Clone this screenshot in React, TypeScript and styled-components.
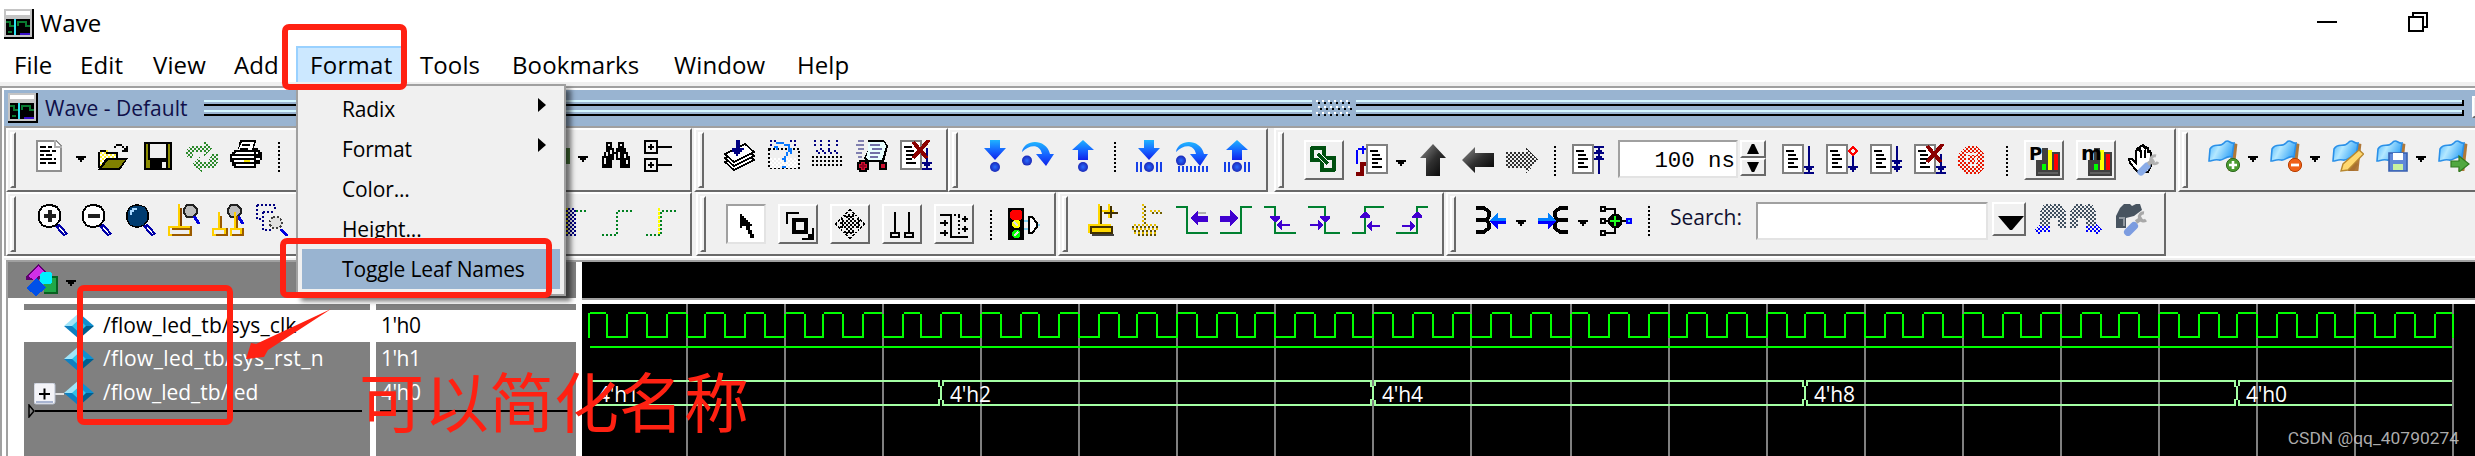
import React from "react";
import styled, { createGlobalStyle, css } from "styled-components";

const UI = `"Open Sans", "Noto Sans", sans-serif`;
const face = "#f0f0f0";
const dark = "#696969";
const mid = "#a0a0a0";
const steel = "#99b4d1";
const red = "#ff2112";

const Global = createGlobalStyle`
  * { box-sizing: border-box; }
  body { margin: 0; background: #fff; overflow: hidden; font-family: ${UI}; color: #000; }
  svg { display: block; flex: none; }
`;

const Screen = styled.div`
  position: relative;
  width: 2475px;
  height: 456px;
  overflow: hidden;
  display: flex;
  flex-direction: column;
  background: #fff;
`;

/* ---------- window chrome ---------- */
const TitleBar = styled.header`
  height: 46px;
  flex: none;
  display: flex;
  align-items: flex-start;
  padding: 9px 47px 0 4px;
`;
const WindowTitle = styled.span`
  margin: -2px 0 0 6px;
  font-size: 24px;
  line-height: 32px;
  flex: 1;
  letter-spacing: 0.1px;
`;
const WindowButton = styled.div<{ $mr?: number }>`
  margin-right: ${(p) => p.$mr ?? 0}px;
`;
const MenuBar = styled.nav`
  height: 36px;
  flex: none;
  display: flex;
`;
const MenuEntry = styled.span<{ $w: number; $active?: boolean; $ls?: number }>`
  width: ${(p) => p.$w}px;
  flex: none;
  height: 38px;
  padding-left: 14px;
  font-size: 24px;
  line-height: 38px;
  white-space: nowrap;
  letter-spacing: ${(p) => p.$ls ?? 0}px;
  ${(p) =>
    p.$active &&
    css`
      background: #cce8ff;
      box-shadow: inset 0 0 0 2px #99d1ff;
    `}
`;

const Pane = styled.main`
  flex: 1;
  display: flex;
  flex-direction: column;
  border-top: 4px solid ${face};
  min-height: 0;
`;
const PaneFrame = styled.div`
  flex: 1;
  display: flex;
  flex-direction: column;
  border-top: 2px solid ${mid};
  border-left: 2px solid ${mid};
  box-shadow: inset 2px 2px 0 #fff;
  padding: 2px 0 0 2px;
  min-height: 0;
`;
const DockTitle = styled.div`
  height: 36px;
  flex: none;
  display: flex;
  align-items: flex-start;
  padding: 3px 0 0 4px;
  background: ${steel};
`;
const DockName = styled.span`
  width: 159px;
  flex: none;
  margin: 1px 0 0 7px;
  font-size: 21px;
  line-height: 28px;
  color: #10104a;
  white-space: nowrap;
`;
const Rails = styled.div<{ $w: number; $cap?: boolean }>`
  width: ${(p) => p.$w}px;
  height: 16px;
  margin-top: 7px;
  flex: none;
  background: linear-gradient(
    #d4f6ff 0 2px, ${steel} 2px 4px, #000 4px 6px, ${steel} 6px 10px,
    #d4f6ff 10px 12px, ${steel} 12px 14px, #000 14px 16px
  );
  ${(p) =>
    p.$cap &&
    css`
      position: relative;
      &::after {
        content: "";
        position: absolute;
        right: 0;
        top: 0;
        width: 2px;
        height: 16px;
        background: linear-gradient(#000 0 6px, transparent 6px 10px, #000 10px 16px);
      }
    `}
`;
const RailGap = styled.div`
  margin-top: 7px;
  flex: none;
`;
const DockButton = styled.div`
  width: 20px;
  height: 22px;
  margin: 3px 0 0 8px;
  flex: none;
  background: ${face};
  border: 2px solid #fff;
  border-bottom-color: ${dark};
`;

/* ---------- toolbars ---------- */
const ToolRow = styled.div<{ $first?: boolean }>`
  height: ${(p) => (p.$first ? 66 : 64)}px;
  flex: none;
  display: flex;
  padding-left: 2px;
  background: ${face};
  border-top: ${(p) => (p.$first ? `2px solid ${mid}` : "0")};
  box-shadow: inset 2px 0 0 ${mid};
`;
const Strip = styled.section<{ $w: number; $ml?: number }>`
  width: ${(p) => p.$w}px;
  margin-left: ${(p) => p.$ml ?? 0}px;
  flex: none;
  height: 64px;
  display: flex;
  gap: 12px;
  align-items: flex-start;
  padding: 2px 0 0 2px;
  border: 2px solid;
  border-color: #fff ${dark} ${dark} #fff;
  overflow: hidden;
`;
const Grip = styled.i`
  width: 6px;
  height: 56px;
  flex: none;
  margin-right: 8px;
  border: 2px solid;
  border-color: #fff ${dark} ${dark} #fff;
`;
const Tool = styled.div<{ $mt?: number; $ml?: number }>`
  width: 32px;
  height: 32px;
  flex: none;
  margin: ${(p) => p.$mt ?? 8}px 0 0 ${(p) => p.$ml ?? 0}px;
`;
const ToolButton = styled.div<{ $pressed?: boolean }>`
  width: 40px;
  height: 40px;
  flex: none;
  margin-top: 8px;
  padding: 2px;
  border: 2px solid;
  border-color: ${(p) => (p.$pressed ? `${mid} #e3e3e3 #e3e3e3 ${mid}` : `#fff ${dark} ${dark} #fff`)};
  background: ${(p) => (p.$pressed ? "#fff" : face)};
`;
const Caret = styled.i<{ $mt?: number }>`
  width: 10px;
  height: 6px;
  flex: none;
  margin: ${(p) => p.$mt ?? 24}px 0 0 -4px;
  background: #000;
  clip-path: polygon(0 0, 100% 0, 100% 33%, 80% 33%, 80% 66%, 60% 66%, 60% 100%, 40% 100%, 40% 66%, 20% 66%, 20% 33%, 0 33%);
`;
const Dots = styled.i<{ $mt?: number }>`
  width: 2px;
  height: 30px;
  flex: none;
  margin: ${(p) => p.$mt ?? 10}px 4px 0;
  background: repeating-linear-gradient(#000 0 2px, transparent 2px 4px);
`;
const Spacer = styled.i<{ $w: number }>`
  width: ${(p) => p.$w}px;
  flex: none;
`;
const Field = styled.div<{ $w: number; $mt: number; $ml: number }>`
  width: ${(p) => p.$w}px;
  height: 38px;
  flex: none;
  margin: ${(p) => p.$mt}px 0 0 ${(p) => p.$ml}px;
  border: 2px solid;
  border-color: ${mid} #e3e3e3 #e3e3e3 ${mid};
  background: #fff;
  text-align: right;
  padding-right: 1px;
  font-family: "Liberation Mono", monospace;
  font-size: 22.4px;
  line-height: 38px;
  white-space: pre;
`;
const Spinner = styled.div`
  width: 26px;
  margin: 8px 4px 0 -10px;
  flex: none;
  display: flex;
  flex-direction: column;
`;
const SpinButton = styled.div<{ $down?: boolean }>`
  height: 18px;
  border: 2px solid;
  border-color: #fff ${dark} ${dark} #fff;
  display: flex;
  justify-content: center;
  padding-top: 2px;
  &::after {
    content: "";
    width: 12px;
    height: 10px;
    background: #000;
    clip-path: ${(p) => (p.$down ? "polygon(0 0, 100% 0, 60% 100%, 40% 100%)" : "polygon(40% 0, 60% 0, 100% 100%, 0 100%)")};
  }
`;
const SearchLabel = styled.span`
  width: 70px;
  margin: 5px 0 0 4px;
  flex: none;
  font-size: 21px;
  line-height: 32px;
  color: #101030;
`;
const ComboButton = styled.div`
  width: 34px;
  height: 34px;
  flex: none;
  margin: 6px 0 0 -8px;
  border: 2px solid;
  border-color: #fff ${dark} ${dark} #fff;
  padding: 12px 0 0 4px;
  &::after {
    content: "";
    display: block;
    width: 26px;
    height: 14px;
    background: #000;
    clip-path: polygon(0 0, 100% 0, 54% 100%, 46% 100%);
  }
`;

/* ---------- signals and waves ---------- */
const Body = styled.div`
  flex: 1;
  display: flex;
  min-height: 0;
  background: #fff;
  border-top: 2px solid #fff;
  box-shadow: inset 0 2px 0 ${face};
  padding: 2px 0 0 2px;
`;
const SignalPane = styled.div`
  width: 570px;
  flex: none;
  display: flex;
  flex-direction: column;
  border-top: 2px solid ${mid};
  border-left: 2px solid ${mid};
`;
const SignalHeader = styled.div`
  height: 36px;
  flex: none;
  display: flex;
  padding: 2px 0 0 18px;
  gap: 12px;
  background: #808080;
`;
const Columns = styled.div`
  flex: 1;
  display: flex;
  min-height: 0;
  margin-top: 2px;
  border-top: 4px solid #fff;
  background: #fff;
`;
const Gutter = styled.div`
  width: 16px;
  flex: none;
`;
const Column = styled.div<{ $w: number; $ml?: number }>`
  width: ${(p) => p.$w}px;
  margin-left: ${(p) => p.$ml ?? 0}px;
  flex: none;
  padding-top: 6px;
  background: #808080;
`;
const SignalRow = styled.div<{ $selected?: boolean; $h?: number }>`
  height: ${(p) => p.$h ?? 34}px;
  display: flex;
  align-items: center;
  font-size: 21px;
  line-height: 30px;
  white-space: nowrap;
  color: ${(p) => (p.$selected ? "#000" : "#fff")};
  background: ${(p) => (p.$selected ? "#fff" : "transparent")};
`;
const Expander = styled.div<{ $shown?: boolean }>`
  width: 40px;
  height: 30px;
  padding: 5px 0 0 10px;
  flex: none;
  svg { visibility: ${(p) => (p.$shown ? "visible" : "hidden")}; }
`;
const SignalName = styled.span<{ $ls: number }>`
  margin-left: 9px;
  padding-bottom: 2px;
  letter-spacing: ${(p) => p.$ls}px;
`;
const SignalValue = styled.span`
  margin-left: 5px;
  padding-bottom: 2px;
  letter-spacing: -0.5px;
`;
const InsertLine = styled.div<{ $l: number; $r: number }>`
  height: 14px;
  display: flex;
  align-items: center;
  margin: -6px ${(p) => p.$r}px 0 ${(p) => p.$l}px;
  &::after {
    content: "";
    flex: 1;
    height: 2px;
    background: #000;
  }
`;
const WavePane = styled.div`
  flex: 1;
  display: flex;
  flex-direction: column;
  border-top: 2px solid ${mid};
`;
const WaveBox = styled.div<{ $h?: number }>`
  ${(p) => (p.$h ? `height: ${p.$h}px; flex: none;` : `flex: 1; margin-top: 6px; box-shadow: 0 -4px 0 #fff, 0 -6px 0 ${mid};`)}
  margin-left: 6px;
  background: #000;
`;

/* ---------- overlays ---------- */
const Popup = styled.div`
  position: absolute;
  left: 296px;
  top: 84px;
  width: 270px;
  height: 212px;
  padding: 3px 4px 4px;
  background: ${face};
  border: 2px solid ${mid};
  box-shadow: 5px 5px 5px rgba(0, 0, 0, 0.55);
`;
const PopupItem = styled.div<{ $active?: boolean }>`
  height: 40px;
  display: flex;
  justify-content: space-between;
  padding: 0 14px 0 40px;
  font-size: 21px;
  line-height: 41px;
  letter-spacing: -0.15px;
  white-space: nowrap;
  background: ${(p) => (p.$active ? steel : "transparent")};
`;
const SubArrow = styled.i`
  width: 8px;
  height: 14px;
  margin-top: 9px;
  background: #000;
  clip-path: polygon(0 0, 100% 50%, 0 100%);
`;
const Marker = styled.div<{ $x: number; $y: number; $w: number; $h: number }>`
  position: absolute;
  left: ${(p) => p.$x}px;
  top: ${(p) => p.$y}px;
  width: ${(p) => p.$w}px;
  height: ${(p) => p.$h}px;
  border: 6px solid ${red};
  border-radius: 7px;
`;
const Note = styled.div`
  position: absolute;
  left: 359px;
  top: 361px;
  font-family: "Noto Sans CJK SC", sans-serif;
  font-size: 65px;
  line-height: 76px;
  color: ${red};
  white-space: nowrap;
`;
const Pointer = styled.svg`
  position: absolute;
  left: 240px;
  top: 304px;
`;
const Watermark = styled.div`
  position: absolute;
  right: 16px;
  bottom: 5px;
  font-family: Roboto, sans-serif;
  font-size: 17.4px;
  line-height: 26px;
  letter-spacing: 0;
  color: rgba(205, 205, 205, 0.85);
`;

/* ---------- icons, drawn on a 16 x 16 grid ---------- */
const Icon = ({ children, size = 32 }: { children: React.ReactNode; size?: number }) => (
  <svg width={size} height={size} viewBox={`0 0 ${size / 2} ${size / 2}`} shapeRendering="crispEdges" fill="none">
    {children}
  </svg>
);
/** one-unit-wide line */
const L = ({ d, c = "#000", w = 1, dash }: { d: string; c?: string; w?: number; dash?: string }) => (
  <path d={d} stroke={c} strokeWidth={w} strokeDasharray={dash} />
);
const F = ({ d, c = "#000" }: { d: string; c?: string }) => <path d={d} fill={c} />;
const Dim = ({ children }: { children: React.ReactNode }) => <g mask="url(#dither)">{children}</g>;

const HiddenDefs = styled.svg`
  position: absolute;
`;
const Defs = () => (
  <HiddenDefs width="0" height="0">
    <defs>
      <pattern id="check" width="2" height="2" patternUnits="userSpaceOnUse">
        <path d="M0 0h1v1h-1zM1 1h1v1h-1z" fill="#fff" shapeRendering="crispEdges" />
      </pattern>
      <mask id="dither" maskUnits="userSpaceOnUse" x="0" y="0" width="18" height="18">
        <rect width="18" height="18" fill="url(#check)" />
      </mask>
      <linearGradient id="blue" x1="0" y1="0" x2="0" y2="1">
        <stop offset="0" stopColor="#1fb4ff" />
        <stop offset=".55" stopColor="#1560ff" />
        <stop offset="1" stopColor="#1020e8" />
      </linearGradient>
      <radialGradient id="ball">
        <stop offset="0" stopColor="#2a6cff" />
        <stop offset="1" stopColor="#1a28b8" />
      </radialGradient>
      <linearGradient id="black" x1="0" y1="0" x2="1" y2="1">
        <stop offset="0" stopColor="#909090" />
        <stop offset=".5" stopColor="#303030" />
        <stop offset="1" stopColor="#000" />
      </linearGradient>
      <linearGradient id="flag" x1="0" y1="0" x2="1" y2=".4">
        <stop offset="0" stopColor="#48b4ff" />
        <stop offset=".45" stopColor="#b4e8ff" />
        <stop offset="1" stopColor="#3ca8f8" />
      </linearGradient>
    </defs>
  </HiddenDefs>
);

const AppIcon = () => (
  <Icon size={30}>
    <F d="M0 0h15v15h-15z" c="#000" />
    <F d="M0 0h14v14h-14z" c="#c4c4c4" />
    <F d="M1 1h12v2h-12z" c="#fff" />
    <F d="M1 5h12v8h-12z" c="#000" />
    <L d="M1 6.5h2v2h3M7 8.5v-2h4v2h2M2 11.5h2" c="#0a7a30" />
    <L d="M5.5 5v8" c="#30e0f0" />
    <L d="M8 12.5h5" c="#3a10c8" />
  </Icon>
);

const Page = () => (
  <>
    <F d="M0 0h11v15h-11z" c="#808080" />
    <F d="M1 1h9v13h-9z" c="#fff" />
    <L d="M2 3.5h4M3 5.5h4M3 7.5h5M3 9.5h3M3 11.5h5" />
  </>
);
const NewDoc = () => (
  <Icon>
    <F d="M0 0h10l3 3v13h-13z" c="#909090" />
    <F d="M1 1h9l2 2v12h-11z" c="#fff" />
    <L d="M9.500 0v3.500h3.500" c="#b0b0b0" />
    <L d="M2 3.500h3M6 3.500h2M2 5.500h5M8 5.500h2M2 7.500h2M5 7.500h3M2 9.500h6M9 9.500h1M2 11.500h3M6 11.500h4" />
  </Icon>
);
const Open = () => (
  <Icon>
    <F d="M0 6h1v-1h4v1h5v3h-6l-3 5h-1z" c="#ffef30" />
    <Dim><F d="M1 6h8v3h-5l-3 5z" c="#fff" /></Dim>
    <L d="M.5 14v-8M1 5.500h3M4 6.500h6M9.500 6v3" />
    <F d="M4 9h11l-4 6h-11z" c="#000" />
    <F d="M5 10h8.500l-3 4h-8.500z" c="#808000" />
    <L d="M8 3.500h1M9 2.500h3M12 3.500h1M13 4.500h1M14.500 3v3M12 5.500h3" />
  </Icon>
);
const Save = () => (
  <Icon>
    <F d="M1 1h14v14h-14z" />
    <F d="M2 2h12v12h-12z" c="#8c8c00" />
    <F d="M3 1h10v9h-10z" />
    <F d="M4 2h8v7h-8z" c={face} />
    <F d="M4 10h9v5h-9z" />
    <F d="M10 11h2v3h-2z" c={face} />
  </Icon>
);
const Reload = () => (
  <Icon>
    <Dim>
      <F d="M0 8V5l2-2h7V0l4 4l-4 4V6H4L3 9H1z" c="#2c8a2c" />
      <F d="M16 7v4l-2 3H8v2l-5-4l4-4v3h4l2-4z" c="#2c8a2c" />
    </Dim>
  </Icon>
);
const Print = () => (
  <Icon>
    <F d="M5 0h8v1l-1 3h2v1h1v1h1v4h-1v2h-2v2h-11v-1h-1v-2h-1v-4h1v-1h1v-1h2z" />
    <F d="M6 1h6l-1 4h-7z" c="#fff" />
    <L d="M6 2.500h4M5 4.500h4" />
    <F d="M3 6h9v1h-10zM1 8h11v1h-11zM2 10h10v1h-10zM13 6h1v1h-1zM13 9h2v1h-2z" c="#fff" />
    <F d="M3 12h9v1h-9z" c="#fff" />
    <L d="M7 10.500h3" c="#f8e800" />
  </Icon>
);
const RedoEdge = () => (
  <Icon><F d="M10 4h6v8h-6z" c="#4a7a3a" /></Icon>
);
const Binoculars = () => (
  <Icon>
    <F d="M3 1h3v3h1v2h1v-2h1v-3h3v3h1v2h1v2h1v6h-5v-4h-4v4h-5v-6h1v-2h1z" />
    <L d="M4.500 2v1M10.500 2v1M3.500 6v2M2.500 9v3M9.500 6v3M5.500 5v2M12.500 7v2M13.500 10v2M7.500 7v3" c={face} />
  </Icon>
);
const Tree = () => (
  <Icon>
    <F d="M0 0h7v7h-7zM0 9h7v7h-7z" />
    <F d="M1 1h5v5h-5zM1 10h5v5h-5z" c={face} />
    <L d="M3.500 2v3M2 3.500h3M3.500 11v3M2 12.500h3M7 3.500h7M7 12.500h7" />
  </Icon>
);
const Compile = () => (
  <Icon>
    {[4.5, 2.5, 0.5].map((y) => (
      <path key={y} d={`M.5 ${y + 6.5}l4.500 4l10 -5l-4.500 -4z`} fill="#fff" stroke="#000" strokeWidth=".8" />
    ))}
    <F d="M6 0h2v4h2v1h-1v1h-1v1h-1v1h-1v-1h-1v-1h-1v-2h2z" c="#000080" />
  </Icon>
);
const CompileAsk = () => (
  <Icon>
    <L d="M1 .5h3M11 .5h3M1.500 2v2M13 2.500h2" c="#000080" dash="1 1" />
    <path d="M.5 4.500h15v9.500h-15z" stroke="#000" strokeDasharray="1 1" />
    <Dim><F d="M1 9h14v5h-14z" c="#fff" /></Dim>
    <L d="M4 1.500h4M3 3.500h2M8 2.500h3M10.500 3v3M11.500 4v3M9.500 6v2M8.500 8v3M7.500 9v1M7 13.500h2M4.500 4v1" c="#0878ff" />
  </Icon>
);
const CompileAll = () => (
  <Icon>
    <L d="M1.500 0v4M4.500 0v5M8.500 0v5M12.500 0v4" c="#000080" dash="1 1" />
    <L d="M2 5.500h12M3 6.500h10" c="#000080" dash="1 2" />
    {[8.5, 10.5, 12.5].map((y) => <L key={y} d={`M0 ${y}h15`} dash="1 1" />)}
  </Icon>
);
const Simulate = () => (
  <Icon>
    <L d="M1 .5h3M0 2.500h4M1 4.500h3M0 6.500h3M1 8.500h2" c="#8080b0" />
    <F d="M6 0h8l2 3l-2 8h-9l-1-2l2-4z" />
    <F d="M6 1h8l1 2l-2 7h-7l-1-1l1-4z" c="#e8ffff" />
    <L d="M7 2.500h5M8 4.500h5M7 6.500h5M7 8.500h4" c="#7070a8" />
    <path d="M2 10.500h3v1h1v3h-1v1h-3v-1h-1v-3h1zM12 11.500h3v3h-3z" fill="#d01030" stroke="#000" />
    <L d="M3.500 11.500v3M2 13h3" c="#900020" />
  </Icon>
);
const Cross = () => (
  <path d="M6.500 1l7 8M14.500 0l-8 9" stroke="#8b0000" strokeWidth="1.9" />
);
const BreakSim = () => (
  <Icon>
    <Page />
    <L d="M13.500 4v10M11 11.500h5M12 12.500h3M11 14.500h5" c="#000080" />
    <Cross />
  </Icon>
);
const Bars = () => <L d="M2.500 11v5M4.500 11v5M12.500 11v5M14.500 11v5" c="#1640e8" />;
const StepIn = ({ bars }: { bars?: boolean }) => (
  <Icon>
    <g shapeRendering="auto">
      <path d="M6 0h5v4h3l-5.500 6L3 4h3z" fill="url(#blue)" />
      <circle cx="8.500" cy="13.500" r="2.500" fill="url(#ball)" />
    </g>
    {bars && <Bars />}
  </Icon>
);
const StepOut = ({ bars }: { bars?: boolean }) => (
  <Icon>
    <g shapeRendering="auto">
      <path d="M6 10h5V5h3L8.500 0L3 5h3z" fill="url(#blue)" />
      <circle cx="8.500" cy="13.500" r="2.500" fill="url(#ball)" />
    </g>
    {bars && <Bars />}
  </Icon>
);
const StepOver = ({ bars }: { bars?: boolean }) => (
  <Icon>
    <g shapeRendering="auto">
      <path d="M0 6C1-.5 12-1 14 7h2l-4 6l-5-6h3C9 2 4 2 0 6z" fill="url(#blue)" />
      <circle cx="2.500" cy="10.300" r="2.500" fill="url(#ball)" />
    </g>
    {bars && <L d="M1.500 13v3M3.500 13v3M5.500 13v3M7.500 13v3M9.500 13v3M11.500 13v3M13.500 13v3M15.500 13v3" c="#1640e8" />}
  </Icon>
);
const Link = () => (
  <Icon>
    <path d="M2 2h6v6h-6zM7 7h6v6h-6z" stroke="#005010" strokeWidth="2" strokeLinejoin="round" />
    <path d="M5 5l5 5" stroke="#fff" strokeWidth="2.800" />
    <path d="M5 5l5 5" stroke="#005010" strokeWidth="1.500" />
  </Icon>
);
const Restart = () => (
  <Icon>
    <g transform="translate(5 0)"><Page /></g>
    <L d="M.5 10v-7M1 2.500h4M3.500 1v4" c="#0000ff" />
    <path d="M0 15h3.500M3 16v-6M2 10h3" stroke="#800000" strokeWidth="2" />
  </Icon>
);
const ArrowUp = () => <Icon><path d="M7.500 0l6.500 7h-3v9H4V7H1z" fill="url(#black)" shapeRendering="auto" /></Icon>;
const ArrowLeft = () => <Icon><path d="M0 8l6.500-6.500V4.500H16v7H6.500v3z" fill="url(#black)" shapeRendering="auto" /></Icon>;
const ArrowRight = () => <Icon><Dim><F d="M16 8l-6-6.500V4H0v8h10v3z" c="#303030" /></Dim></Icon>;

const navy = "#000080";
const RunDoc = ({ kind }: { kind: "up" | "run" | "cont" | "all" | "break" }) => (
  <Icon>
    <Page />
    {kind === "up" && <><L d="M11 1.500h5M13.500 2v13" c={navy} /><F d="M11 4h1V3h1V2h1v1h1v1h1v1h-5zM11 7h1V6h1V5h1v1h1v1h1v1h-5z" c={navy} /></>}
    {kind === "run" && <><L d="M13.500 1v12M11 14.500h5" c={navy} /><F d="M11 11h5v1h-1v1h-1v1h-1v-1h-1v-1h-1z" c={navy} /></>}
    {kind === "cont" && <><L d="M13.500 6v7" c={navy} /><F d="M11 11h5v1h-1v1h-1v1h-1v-1h-1v-1h-1z" c={navy} /><path d="M13.500 1.500l2 2l-2 2l-2-2z" stroke="#ff0000" /></>}
    {kind === "all" && <><L d="M13.500 1v12" c={navy} /><F d="M11 8h5v1h-1v1h-3v-1h-1zM11 11h5v1h-1v1h-1v1h-1v-1h-1v-1h-1z" c={navy} /></>}
    {kind === "break" && <><L d="M13.500 5v10M11 11.500h5M12 12.500h3M11 14.500h5" c={navy} /><Cross /></>}
  </Icon>
);
const Stop = () => (
  <Icon>
    <Dim>
      <F d="M4 1h5l4 4v7l-3 3h-6l-4-4v-6z" c="#e81800" />
    </Dim>
    <L d="M4.500 10v-5h5M9 6.500v3M6 10.500h4" c={face} w={0.8} />
  </Icon>
);
const Profile = ({ letter }: { letter: string }) => (
  <Icon>
    <F d="M4 8h3V2h3V4h6v12H4z" c="#404040" />
    <F d="M7 10h2v3h-2z" c="#00ff00" />
    <F d="M10 3h2v10h-2z" c="#ffff00" />
    <F d="M13 5h2v8h-2z" c="#ff0000" />
    <L d="M5 14.500h10" c="#606060" />
    <text x=".5" y="8" fontFamily="DejaVu Sans" fontWeight="700" fontSize={letter === "P" ? 9 : 10} fill="#000">{letter}</text>
  </Icon>
);
const HandTool = () => (
  <Icon>
    <path d="M4 13L1 9.500L.5 7.500h1.500l2 2V3.500L5 2l1 1.500V1.500L7.500.5L8.500 2V1.500L10 2v2l1-.5l.5 1.500v6L10 14H5z" fill="#fff" stroke="#000" />
    <L d="M6.500 3v4M8.500 3v4" />
    <g shapeRendering="auto">
      <path d="M6.500 14l3-3" stroke="#8aace8" strokeWidth="3.600" strokeLinecap="round" />
      <path d="M10 10l3-2" stroke="#b0b0b0" strokeWidth="2" />
      <path d="M14 6a2 2 0 1 0 1 3" stroke="#b0b0b0" strokeWidth="1.500" />
    </g>
  </Icon>
);
const Flag = ({ badge }: { badge: "add" | "del" | "edit" | "save" | "go" }) => (
  <Icon>
    <g shapeRendering="auto">
      <path d="M12.500 1.500l2.200 .5l-1.500 13.500h-3z" fill="#b07838" />
      <path d="M1 4.500C3 1 6 4 8 1.500S11 2 13 1.500L12 8.500C9 7.500 8 10.500 5.500 10S2 10.500 .5 10.500z" fill="url(#flag)" stroke="#2a90e8" strokeWidth=".8" />
      {badge === "add" && <><circle cx="12.500" cy="12.500" r="3.300" fill="#4a9a30" stroke="#2f6a20" strokeWidth=".5" /><path d="M12.500 10.500v4M10.500 12.500h4" stroke="#fff" strokeWidth="1.300" /></>}
      {badge === "del" && <><circle cx="12.500" cy="12.500" r="3.300" fill="#f06018" stroke="#b84000" strokeWidth=".5" /><path d="M10.500 12.500h4" stroke="#fff" strokeWidth="1.400" /></>}
      {badge === "edit" && <><path d="M8 14l3-3l2 1l-2 3.500h-3z" fill="#a87030" /><path d="M4.500 15.500l1-3.500l8-7l2.300 2l-7.800 8z" fill="#ffd870" stroke="#b88830" strokeWidth=".7" /></>}
      {badge === "save" && <><path d="M6.500 6.500h9v9h-9z" fill="#6088d8" stroke="#3860b0" strokeWidth=".8" /><path d="M8.500 6.500h5v3.500h-5z" fill="#fff" /><path d="M8.500 12h5v3h-5z" fill="#c8f0a0" /></>}
      {badge === "go" && <path d="M6.500 10.500h4V8l5 4l-5 4v-2.500h-4z" fill="#50a840" stroke="#2f7a20" strokeWidth=".6" />}
    </g>
  </Icon>
);
const Zoom = ({ kind }: { kind: "in" | "out" | "full" }) => (
  <Icon>
    <path d="M10.500 10.500l4.500 5" stroke="#0000a8" strokeWidth="2.600" />
    <path d="M11.500 11.500l3 3.500" stroke="#fff" strokeWidth=".6" />
    <path d="M5.500 .5h2l3 1l1.500 2.500v4l-2 2.500l-2.500 1h-2l-2.500-1l-1.500-2.500v-4l1.500-2.500z" fill={kind === "full" ? "#003c70" : "#fff"} stroke="#000" strokeWidth={kind === "full" ? 0.6 : 1} />
    {kind !== "full" && <path d="M4 6h6" stroke="#202020" strokeWidth="2" />}
    {kind === "in" && <path d="M7 3v6" stroke="#202020" strokeWidth="2" />}
    {kind === "full" && <L d="M3.500 5.500v-2h1v-1h2" c="#a8d8ff" />}
  </Icon>
);
const Lens = ({ x }: { x: number }) => (
  <g transform={`translate(${x} 0)`}>
    <path d="M1.500 .5h3l2 2v2l-2 2h-3l-1.500-2v-2z" fill="#bcbcbc" stroke="#202020" />
    <path d="M5 6l2.500 4" stroke="#0000e0" strokeWidth="1.500" />
  </g>
);
const ZoomCursor = () => (
  <Icon>
    <Lens x={8} />
    <L d="M5.500 0v11" c="#ffd000" />
    <L d="M6.500 2v9" c="#804000" w={0.7} />
    <path d="M.5 11.500h10.500v4h-10.500z" stroke="#ffd000" />
    <L d="M2 15.500h10M11.500 11v5M2 12.500h9" c="#9a5a00" />
  </Icon>
);
const ZoomCursors = () => (
  <Icon>
    <Lens x={8} />
    <L d="M3.500 4v8M11.500 4v8" c="#ffd000" />
    <path d="M.5 12.500h6v3h-6zM9.500 12.500h5v3h-5z" stroke="#ffd000" />
    <L d="M2 15.500h6M7.500 12v4M10 15.500h6M15.500 12v4M4.500 6v6M12.500 6v6" c="#9a5a00" />
  </Icon>
);
const ZoomArea = () => (
  <Icon>
    <path d="M.5 .5h9v3M.5 .5v7h2M3.500 4v9h4M3.500 4h5" stroke={navy} strokeDasharray="1 1" />
    <path d="M8.500 6.500h3l1.500 2v2l-1.500 1.500h-3l-1.500-1.500v-2z" fill="#e0e0e0" stroke="#404040" strokeDasharray="1 1" />
    <path d="M12.500 12.500l3 3.500" stroke="#0000e0" strokeWidth="1.400" />
  </Icon>
);
const EdgeA = () => (
  <Icon>
    <Dim><F d="M4 2h6v14h-6z" c={navy} /></Dim>
    <L d="M5.500 2v14" c="#e8e000" dash="1 1" />
    <L d="M10 3.500h6" c="#008020" dash="1 1" />
  </Icon>
);
const EdgeB = ({ yellow }: { yellow?: boolean }) => (
  <Icon>
    {yellow && <L d="M7.500 2v14" c="#ffff00" dash="1.500 .5" />}
    <L d="M1 15.500h7M8.500 15v-12M9 3.500h7" c="#008020" dash="1 1" />
  </Icon>
);

const Select = () => <Icon><F d="M5 3v7h1v-1h2v2h1v2h1v2h2v-2h-1v-2h-1v-2h1v-1h-1v-1h-1v-1h-1v-1h-1v-1h-1v-1z" /></Icon>;
const Resize = () => (
  <Icon>
    <L d="M2.500 8v-5.500h6" />
    <path d="M6 6h6v6h-6z" stroke="#000" strokeWidth="2" />
    <F d="M16 10v6h-6v-1h3v-2h2v-3z" />
  </Icon>
);
const Pan = () => (
  <Icon>
    <path d="M8 .5l3 3.500M8 .5l-3 3.500M.5 8l3.500-3M.5 8l3.500 3M15.500 8l-3.500-3M15.500 8l-3.500 3M8 15.500l-3-3.500M8 15.500l3-3.500M5 4h6M5 12h6M4 5v6M12 5v6" stroke="#000" strokeWidth=".8" strokeDasharray="1.200 .8" />
    <Dim>
      <F d="M6 3h4v10h-4z" />
      <F d="M3 6h10v4h-10z" />
    </Dim>
  </Icon>
);
const TwoCursors = () => (
  <Icon>
    <L d="M4.500 2v11M11.500 2v11" />
    <path d="M2.500 12.500h4v2h-4zM9.500 12.500h4v2h-4z" stroke="#000" />
  </Icon>
);
const EditMode = () => (
  <Icon>
    <L d="M1 3.500h5M6.500 3v12M6 14.500h9" />
    <L d="M8 3.500h3M10.500 4v10" dash="1 1" />
    <L d="M1 7.500h4M3.500 6v3M1 12.500h4M3.500 11v3M12 5.500h3M13.500 4v3M12 10.500h3M13.500 9v3" />
  </Icon>
);
const Traffic = () => (
  <Icon>
    <F d="M0 0h8v16h-8z" />
    <F d="M2 1h4l1 1v3l-1 1h-4l-1-1v-3z" c="#ff0000" />
    <F d="M3 6h2l1 1v2l-1 1h-2l-1-1v-2z" c="#ffff00" />
    <F d="M3 11h2l1 1v2l-1 1h-2l-1-1v-2z" c="#00ff00" />
    <path d="M3 7l2 2M5 12l-2 2" stroke="#e0e0e0" />
    <L d="M8 6.500h2M8 10.500h2M15 8.500h1" c="#80d0f0" />
    <path d="M10.500 4.500h1.500l2.500 3v2l-2.500 3h-1.500z" fill="#fff" stroke="#000" />
  </Icon>
);
const CursorAdd = () => (
  <Icon>
    <L d="M2 15.500h11" c="#404040" />
    <path d="M5.500 0v11" stroke="#ffd800" />
    <L d="M6.500 1v10" c="#403000" />
    <path d="M.5 14.500v-4h11" stroke="#ffd800" />
    <path d="M1.500 14.500v-3h10.500v3z" fill="#ffd800" stroke="#403000" />
    <L d="M10.500 0v7M7 3.500h6" c="#ffd800" />
    <L d="M11.500 1v6M8 4.500h7" c="#403000" />
  </Icon>
);
const CursorDel = () => (
  <Icon>
    <L d="M1 10.500h12M0 12.500h13M1 14.500h12" c="#e8c000" dash="1 1" />
    <L d="M0 11.500h13M1 13.500h12M3 15.500h10" c="#605000" dash="1 1" />
    <L d="M5.500 0v10M9 3.500h6" c="#e8c000" dash="1 1" />
    <L d="M6.500 1v9M10 4.500h5" c="#706000" dash="1 1" />
  </Icon>
);
const green = "#008030";
const purple = "#4000d0";
const Jump = ({ kind }: { kind: number }) => (
  <Icon>
    {kind === 0 && <><L d="M0 1.500h6M5.500 1v14M5 14.500h11" c={green} /><F d="M7 7l4-4v3h5v3h-5v2z" c={purple} /><L d="M11 4.500h4" c="#b0b0b0" /></>}
    {kind === 1 && <><L d="M0 14.500h11M10.500 15v-14M10 1.500h6" c={green} /><F d="M9 7l-4-4v3h-5v3h5v2z" c={purple} /></>}
    {kind === 2 && <><L d="M0 1.500h6M5.500 1v14M5 14.500h11" c={green} /><F d="M3 6h5v1l-2 2h-1l-2-2zM6 10.500l3-2.500v2h4v1h-4v2z" c={purple} /></>}
    {kind === 3 && <><L d="M0 1.500h9M8.500 1v14M8 14.500h8" c={green} /><F d="M6 6h5v1l-2 2h-1l-2-2zM8 10.500l-3-2.500v2h-4v1h4v2z" c={purple} /></>}
    {kind === 4 && <><L d="M0 14.500h7M6.500 15v-14M6 1.500h10" c={green} /><F d="M4 7h5v-1l-2-2h-1l-2 2zM7 11l3-2.500v2h4v1h-4v2z" c={purple} /></>}
    {kind === 5 && <><L d="M0 14.500h11M10.500 15v-14M10 1.500h6" c={green} /><F d="M8 7h5v-1l-2-2h-1l-2 2zM10 11l-3-2.500v2h-4v1h4v2z" c={purple} /></>}
  </Icon>
);
const Drivers = () => (
  <Icon>
    <path d="M0 2h4l2.500 2v2l-1 2h-5.500M5.500 8l1 2v2l-2.500 2h-4" stroke="#000" strokeWidth="1.800" />
    <F d="M7 8.500l4-4.500v3h4v3h-4v3z" c="#0000ff" />
    <F d="M7 8.500l4-4.500v3h4v1.500z" c="#0080ff" />
  </Icon>
);
const Readers = () => (
  <Icon>
    <path d="M15 2h-4l-2.500 2v2l1 2h5.500M9.500 8l-1 2v2l2.500 2h4" stroke="#000" strokeWidth="1.800" />
    <F d="M9 8.500l-4-4.500v3h-5v3h5v3z" c="#0000ff" />
    <F d="M9 8.500l-4-4.500v3h-5v1.500z" c="#0080ff" />
  </Icon>
);
const Expand = () => (
  <Icon>
    <path d="M.5 1.500h2v2h-2zM.5 7.500h2v2h-2zM.5 13.500h2v2h-2zM3 2.500h4.500v3M3 8.500h2M3 14.500h4.500v-3M10 8.500h3" stroke="#000" />
    <F d="M6 5h3l2 2v3l-2 2h-3l-2-2v-3z" />
    <path d="M7.500 6v5M5 8.500h5" stroke="#20ff20" />
    <path d="M13.500 7.500h2v2h-2z" fill="#30d0ff" stroke="#0000ff" />
  </Icon>
);
const FindStep = ({ next }: { next?: boolean }) => (
  <Icon>
    <g transform={next ? "translate(16 0) scale(-1 1)" : undefined}>
      <Dim>
        <F d="M5 0h3l1 1l1-1h3l3 4v8h-4v-5h-4v4h-5v-7z" c="#405060" />
        <F d="M0 13l3-3v1h5v3h-5v2z" c="#0000ff" />
      </Dim>
    </g>
  </Icon>
);
const FindOptions = () => (
  <Icon>
    <g shapeRendering="auto">
      <path d="M2 2l2-2h3l1 1l2-1h2l1 3l-4 3l-4 1v5H0V6z" fill="#485460" />
      <path d="M1.500 7h2.500v4" stroke="#9098a0" />
      <path d="M6 14l3-3" stroke="#7c9ce0" strokeWidth="4" strokeLinecap="round" />
      <path d="M10 9l3-2" stroke="#a8a8a8" strokeWidth="2" />
      <path d="M14 4.500a2 2 0 1 0 1 3.500" stroke="#a8a8a8" strokeWidth="1.600" />
    </g>
  </Icon>
);
const Shapes = () => (
  <Icon>
    <F d="M6 0l4 4l-4 4h-6v-2z" c="#600070" />
    <F d="M6 1l3 3l-5 4l-3-2z" c="#d030e8" />
    <F d="M9 6h7v9h-7z" c="#086020" />
    <F d="M9 7h6v7h-6z" c="#20a848" />
    <F d="M8 4h4l1 1v4l-1 1h-4l-1-1v-4z" c="#00f0ff" />
    <F d="M5 7l5 5l-5 4l-5-4z" c="#0050e8" />
  </Icon>
);
const Gem = () => (
  <svg width="30" height="26" viewBox="0 0 30 28" preserveAspectRatio="none">
    <path d="M15 0L0 14h15z" fill="#a0e4f8" />
    <path d="M0 14h15v14z" fill="#1080c0" />
    <path d="M15 0l15 14H15z" fill="#1090d0" />
    <path d="M30 14L15 28V14z" fill="#006090" />
    <path d="M15 7l7 7l-7 7l-7-7z" fill="#30c0e8" />
  </svg>
);
const Plus = () => (
  <svg width="30" height="22" viewBox="0 0 30 22">
    <path d="M20 11h10" stroke="#e0e0e0" strokeWidth="2" />
    <rect x="0" y="0" width="21" height="21" rx="2" fill="#f4f4f8" stroke="#b8c0d0" />
    <path d="M2 19h17" stroke="#a8b4d0" strokeWidth="2" />
    <path d="M5 11h11M10.500 5.500v11" stroke="#000" strokeWidth="2" />
  </svg>
);

/* ---------- waveforms ---------- */
const ORIGIN = 582;
const edge = (k: number) => 588 - ORIGIN + 2 * Math.floor(9.82 * k + 1e-6);
const clockPath = () => {
  let d = `M${edge(0) + 1} 34V9`;
  for (let k = 0; k < 95; k++) {
    const y = k % 2 ? 33 : 9;
    d += `M${edge(k) + (k % 2 ? 0 : 2)} ${y}H${edge(k + 1) + (k % 2 ? 2 : 0)}M${edge(k + 1) + 1} 10V34`;
  }
  return d;
};
const busEdges = [18, 40, 62, 84].map(edge);
const busStarts = [edge(0) - 2, ...busEdges];
const busEnds = [...busEdges, edge(95) + 2];
const busValues = ["4'h1", "4'h2", "4'h4", "4'h8", "4'h0"];

const Waves = () => (
  <svg width="1893" height="152" shapeRendering="crispEdges" fill="none" strokeWidth="2">
    {Array.from({ length: 19 }, (_, i) => (
      <path key={i} d={`M${edge(5 * (i + 1)) + 1} 0V152`} stroke="#808080" />
    ))}
    <path d={clockPath()} stroke="#00ff00" />
    <path d={`M8 43H${edge(95)}`} stroke="#00ff00" />
    {busValues.map((v, i) => (
      <g key={v}>
        <path d={`M${busStarts[i] + 2} 77H${busEnds[i] - 2}M${busStarts[i] + 2} 101H${busEnds[i] - 2}`} stroke="#a4ffa4" />
        {i > 0 && (
          <path
            d={`M${busStarts[i] + 1} 82v14M${busStarts[i] - 1} 76v7M${busStarts[i] + 3} 76v6M${busStarts[i] - 1} 95v7M${busStarts[i] + 3} 96v6`}
            stroke="#a4ffa4"
          />
        )}
        <text x={busStarts[i] + (i ? 10 : 12)} y="98" fill="#fff" fontFamily={UI} fontSize="21" letterSpacing="-.2">
          {v}
        </text>
      </g>
    ))}
  </svg>
);

const RailDots = () => (
  <svg width="44" height="16" viewBox="0 0 22 8" shapeRendering="crispEdges">
    {[0, 3, 6].map((y, r) =>
      Array.from({ length: 6 }, (_, i) => (
        <g key={`${y}-${i}`}>
          <rect x={2 + i * 3 + (r === 1 ? 1 : 0)} y={y} width="1" height="1" fill="#fff" />
          <rect x={3 + i * 3 + (r === 1 ? 1 : 0)} y={y + 1} width="1" height="1" fill="#000" />
        </g>
      ))
    )}
  </svg>
);

const menus: [string, number, boolean?][] = [
  ["File", 66], ["Edit", 73], ["View", 81], ["Add", 76], ["Format", 110, true],
  ["Tools", 92], ["Bookmarks", 162], ["Window", 123], ["Help", 80],
];

export default function App() {
  return (
    <Screen>
      <Global />
      <Defs />
      <TitleBar>
        <AppIcon />
        <WindowTitle>Wave</WindowTitle>
        <WindowButton $mr={71}>
          <svg width="20" height="24"><path d="M0 13h20" stroke="#000" strokeWidth="2" shapeRendering="crispEdges" /></svg>
        </WindowButton>
        <WindowButton>
          <svg width="20" height="24" fill="none" stroke="#000" strokeWidth="2" shapeRendering="crispEdges">
            <path d="M5 8V4h14v14h-4M1 8h14v14H1z" />
          </svg>
        </WindowButton>
      </TitleBar>
      <MenuBar>
        {menus.map(([name, w, active]) => (
          <MenuEntry key={name} $w={w} $active={active} $ls={active ? 0.3 : 0.1}>{name}</MenuEntry>
        ))}
      </MenuBar>
      <Pane>
        <PaneFrame>
          <DockTitle>
            <AppIcon />
            <DockName>Wave - Default</DockName>
            <Rails $w={1108} />
            <RailGap><RailDots /></RailGap>
            <Rails $w={1108} $cap />
            <DockButton />
          </DockTitle>

          <ToolRow $first>
            <Strip $w={686}>
              <Grip />
              <Tool><NewDoc /></Tool><Caret />
              <Tool><Open /></Tool>
              <Tool><Save /></Tool>
              <Tool><Reload /></Tool>
              <Tool><Print /></Tool>
              <Dots />
              <Spacer $w={230} />
              <Tool><RedoEdge /></Tool><Caret />
              <Tool><Binoculars /></Tool>
              <Tool><Tree /></Tool>
            </Strip>
            <Strip $w={254} $ml={2}>
              <Grip />
              <Tool><Compile /></Tool>
              <Tool><CompileAsk /></Tool>
              <Tool><CompileAll /></Tool>
              <Tool><Simulate /></Tool>
              <Tool><BreakSim /></Tool>
            </Strip>
            <Strip $w={320}>
              <Grip />
              <Tool><StepIn /></Tool>
              <Tool><StepOver /></Tool>
              <Tool><StepOut /></Tool>
              <Dots />
              <Tool><StepIn bars /></Tool>
              <Tool><StepOver bars /></Tool>
              <Tool><StepOut bars /></Tool>
            </Strip>
            <Strip $w={902} $ml={6}>
              <Grip />
              <ToolButton><Link /></ToolButton>
              <Tool $mt={12}><Restart /></Tool><Caret $mt={28} />
              <Tool $mt={12}><ArrowUp /></Tool>
              <Tool $mt={12}><ArrowLeft /></Tool>
              <Tool $mt={12}><ArrowRight /></Tool>
              <Dots $mt={14} />
              <Tool $mt={12}><RunDoc kind="up" /></Tool>
              <Field $w={120} $mt={8} $ml={2}>100 ns</Field>
              <Spinner><SpinButton /><SpinButton $down /></Spinner>
              <Tool $mt={12}><RunDoc kind="run" /></Tool>
              <Tool $mt={12}><RunDoc kind="cont" /></Tool>
              <Tool $mt={12}><RunDoc kind="all" /></Tool>
              <Tool $mt={12}><RunDoc kind="break" /></Tool>
              <Tool $mt={12}><Stop /></Tool>
              <Dots $mt={14} />
              <ToolButton><Profile letter="P" /></ToolButton>
              <ToolButton><Profile letter="m" /></ToolButton>
              <Tool $mt={12}><HandTool /></Tool>
            </Strip>
            <Strip $w={320} $ml={2}>
              <Grip />
              <Tool><Flag badge="add" /></Tool><Caret />
              <Tool><Flag badge="del" /></Tool><Caret />
              <Tool><Flag badge="edit" /></Tool>
              <Tool><Flag badge="save" /></Tool><Caret />
              <Tool><Flag badge="go" /></Tool>
            </Strip>
          </ToolRow>

          <ToolRow>
            <Strip $w={686}>
              <Grip />
              <Tool><Zoom kind="in" /></Tool>
              <Tool><Zoom kind="out" /></Tool>
              <Tool><Zoom kind="full" /></Tool>
              <Tool><ZoomCursor /></Tool>
              <Tool><ZoomCursors /></Tool>
              <Tool><ZoomArea /></Tool>
              <Spacer $w={244} />
              <Tool><EdgeA /></Tool>
              <Tool><EdgeB /></Tool>
              <Tool><EdgeB yellow /></Tool>
            </Strip>
            <Strip $w={360} $ml={4}>
              <Grip />
              <ToolButton $pressed><Select /></ToolButton>
              <ToolButton><Resize /></ToolButton>
              <ToolButton><Pan /></ToolButton>
              <ToolButton><TwoCursors /></ToolButton>
              <ToolButton><EditMode /></ToolButton>
              <Dots $mt={14} />
              <Tool $mt={12}><Traffic /></Tool>
            </Strip>
            <Strip $w={386} $ml={2}>
              <Grip />
              <Tool><CursorAdd /></Tool>
              <Tool><CursorDel /></Tool>
              {[0, 1, 2, 3, 4, 5].map((k) => <Tool key={k}><Jump kind={k} /></Tool>)}
            </Strip>
            <Strip $w={720} $ml={2}>
              <Grip />
              <Tool><Drivers /></Tool><Caret />
              <Tool><Readers /></Tool><Caret />
              <Tool><Expand /></Tool>
              <Dots />
              <SearchLabel>Search:</SearchLabel>
              <Field $w={232} $mt={6} $ml={4} />
              <ComboButton />
              <Tool $ml={-4}><FindStep /></Tool>
              <Tool $ml={-8}><FindStep next /></Tool>
              <Tool $ml={2}><FindOptions /></Tool>
            </Strip>
          </ToolRow>

          <Body>
            <SignalPane>
              <SignalHeader><Shapes /><Caret $mt={16} /></SignalHeader>
              <Columns>
                <Gutter />
                <Column $w={346}>
                  <SignalRow $selected $h={32}>
                    <Expander /><Gem /><SignalName $ls={0.1}>/flow_led_tb/sys_clk</SignalName>
                  </SignalRow>
                  <SignalRow>
                    <Expander /><Gem /><SignalName $ls={0.35}>/flow_led_tb/sys_rst_n</SignalName>
                  </SignalRow>
                  <SignalRow>
                    <Expander $shown><Plus /></Expander><Gem /><SignalName $ls={0}>/flow_led_tb/led</SignalName>
                  </SignalRow>
                  <InsertLine $l={4} $r={8}>
                    <svg width="7" height="14" fill="none" stroke="#000" strokeWidth="1.500"><path d="M1 1l5 6l-5 6z" /></svg>
                  </InsertLine>
                </Column>
                <Column $w={200} $ml={6}>
                  <SignalRow $selected $h={32}><SignalValue>1'h0</SignalValue></SignalRow>
                  <SignalRow><SignalValue>1'h1</SignalValue></SignalRow>
                  <SignalRow><SignalValue>4'h0</SignalValue></SignalRow>
                  <InsertLine $l={4} $r={8} />
                </Column>
              </Columns>
            </SignalPane>
            <WavePane>
              <WaveBox $h={36} />
              <WaveBox><Waves /></WaveBox>
            </WavePane>
          </Body>
        </PaneFrame>
      </Pane>

      <Popup>
        <PopupItem>Radix<SubArrow /></PopupItem>
        <PopupItem>Format<SubArrow /></PopupItem>
        <PopupItem>Color...</PopupItem>
        <PopupItem>Height...</PopupItem>
        <PopupItem $active>Toggle Leaf Names</PopupItem>
      </Popup>

      <Marker $x={282} $y={24} $w={125} $h={66} />
      <Marker $x={280} $y={238} $w={272} $h={60} />
      <Marker $x={77} $y={285} $w={156} $h={140} />
      <Pointer width="96" height="60">
        <path d="M91 5L28 46L24 53L6 55L11 39L16 40Z" fill={red} />
      </Pointer>
      <Note>可以简化名称</Note>
      <Watermark>CSDN @qq_40790274</Watermark>
    </Screen>
  );
}
